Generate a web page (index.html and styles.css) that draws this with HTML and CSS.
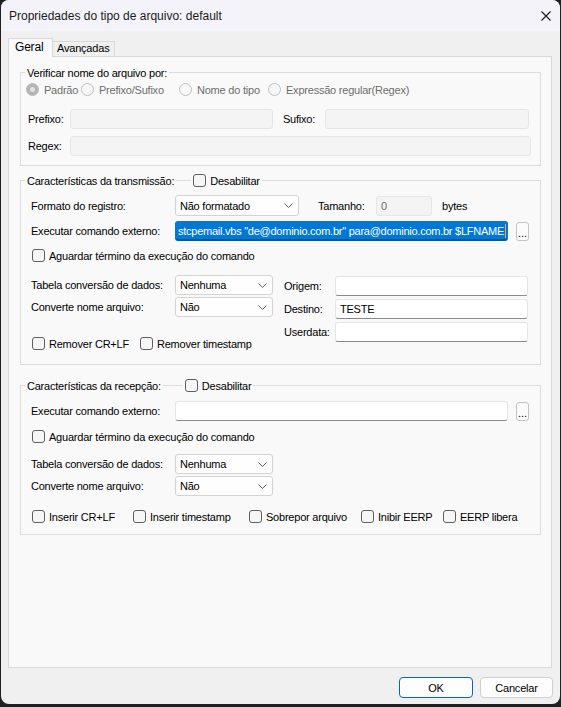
FILE: index.html
```html
<!DOCTYPE html>
<html lang="pt-BR">
<head>
    <meta charset="UTF-8">
    <title>Propriedades do tipo de arquivo: default</title>
    <link rel="stylesheet" href="styles.css">
</head>
<body>
    <div class="window">
        <div class="titlebar">
            <span class="title">Propriedades do tipo de arquivo: default</span>
            <svg class="close" width="10" height="10" viewBox="0 0 10 10">
                <path d="M0.5 0.5 L9.5 9.5 M9.5 0.5 L0.5 9.5" stroke="#1b1b1b" stroke-width="1.1" fill="none"/>
            </svg>
        </div>

        <div class="tabs">
            <div class="tab active">Geral</div>
            <div class="tab">Avançadas</div>
        </div>

        <div class="panel">
            <!-- verificação do nome -->
            <div class="group g-name">
                <div class="group-head">
                    <span class="group-title">Verificar nome do arquivo por:</span>
                </div>
                <div class="radio-row">
                    <label class="radio w-padrao"><span class="dot on"></span>Padrão</label>
                    <label class="radio w-prefixo"><span class="dot"></span>Prefixo/Sufixo</label>
                    <label class="radio w-nome"><span class="dot"></span>Nome do tipo</label>
                    <label class="radio"><span class="dot"></span>Expressão regular(Regex)</label>
                </div>
                <div class="row name-row first">
                    <span class="lbl lbl-short">Prefixo:</span>
                    <div class="field disabled w-prefix"></div>
                    <span class="lbl lbl-short lbl-sufixo">Sufixo:</span>
                    <div class="field disabled w-suffix"></div>
                </div>
                <div class="row name-row second">
                    <span class="lbl lbl-short">Regex:</span>
                    <div class="field disabled w-regex"></div>
                </div>
            </div>

            <!-- transmissão -->
            <div class="group g-tx">
                <div class="group-head">
                    <span class="group-title">Características da transmissão:</span>
                    <label class="check head-check tx-check"><span class="box"></span>Desabilitar</label>
                </div>
                <div class="body">
                    <div class="row r-formato">
                        <span class="lbl lbl-long">Formato do registro:</span>
                        <div class="combo w-formato">Não formatado
                            <svg width="9" height="5" viewBox="0 0 9 5"><path d="M0.5 0.5 L4.5 4.5 L8.5 0.5" stroke="#5d5d5d" fill="none"/></svg>
                        </div>
                        <span class="lbl lbl-tamanho">Tamanho:</span>
                        <div class="field disabled w-tamanho">0</div>
                        <span class="unit">bytes</span>
                    </div>
                    <div class="row r-cmd">
                        <span class="lbl lbl-long">Executar comando externo:</span>
                        <div class="field selected w-cmd">stcpemail.vbs "de@dominio.com.br" para@dominio.com.br $LFNAME<span class="caret"></span></div>
                        <button class="dots">...</button>
                    </div>
                    <div class="row r-wait">
                        <label class="check"><span class="box"></span>Aguardar término da execução do comando</label>
                    </div>
                    <div class="cols">
                        <div class="col-left">
                            <div class="row">
                                <span class="lbl lbl-long">Tabela conversão de dados:</span>
                                <div class="combo w-small">Nenhuma
                                    <svg width="9" height="5" viewBox="0 0 9 5"><path d="M0.5 0.5 L4.5 4.5 L8.5 0.5" stroke="#5d5d5d" fill="none"/></svg>
                                </div>
                            </div>
                            <div class="row r-next">
                                <span class="lbl lbl-long">Converte nome arquivo:</span>
                                <div class="combo w-small">Não
                                    <svg width="9" height="5" viewBox="0 0 9 5"><path d="M0.5 0.5 L4.5 4.5 L8.5 0.5" stroke="#5d5d5d" fill="none"/></svg>
                                </div>
                            </div>
                            <div class="row r-opts">
                                <label class="check w-crlf"><span class="box"></span>Remover CR+LF</label>
                                <label class="check"><span class="box"></span>Remover timestamp</label>
                            </div>
                        </div>
                        <div class="col-right">
                            <div class="row">
                                <span class="lbl lbl-route">Origem:</span>
                                <div class="field w-route"></div>
                            </div>
                            <div class="row">
                                <span class="lbl lbl-route">Destino:</span>
                                <div class="field w-route">TESTE</div>
                            </div>
                            <div class="row">
                                <span class="lbl lbl-route">Userdata:</span>
                                <div class="field w-route"></div>
                            </div>
                        </div>
                    </div>
                </div>
            </div>

            <!-- recepção -->
            <div class="group g-rx">
                <div class="group-head">
                    <span class="group-title">Características da recepção:</span>
                    <label class="check head-check rx-check"><span class="box"></span>Desabilitar</label>
                </div>
                <div class="body">
                    <div class="row r-cmd-rx">
                        <span class="lbl lbl-long">Executar comando externo:</span>
                        <div class="field w-cmd"></div>
                        <button class="dots">...</button>
                    </div>
                    <div class="row r-wait-rx">
                        <label class="check"><span class="box"></span>Aguardar término da execução do comando</label>
                    </div>
                    <div class="row r-table-rx">
                        <span class="lbl lbl-long">Tabela conversão de dados:</span>
                        <div class="combo w-small">Nenhuma
                            <svg width="9" height="5" viewBox="0 0 9 5"><path d="M0.5 0.5 L4.5 4.5 L8.5 0.5" stroke="#5d5d5d" fill="none"/></svg>
                        </div>
                    </div>
                    <div class="row r-next">
                        <span class="lbl lbl-long">Converte nome arquivo:</span>
                        <div class="combo w-small">Não
                            <svg width="9" height="5" viewBox="0 0 9 5"><path d="M0.5 0.5 L4.5 4.5 L8.5 0.5" stroke="#5d5d5d" fill="none"/></svg>
                        </div>
                    </div>
                    <div class="row r-opts-rx">
                        <label class="check w-ins-crlf"><span class="box"></span>Inserir CR+LF</label>
                        <label class="check w-ins-ts"><span class="box"></span>Inserir timestamp</label>
                        <label class="check w-sobrepor"><span class="box"></span>Sobrepor arquivo</label>
                        <label class="check w-inibir"><span class="box"></span>Inibir EERP</label>
                        <label class="check"><span class="box"></span>EERP libera</label>
                    </div>
                </div>
            </div>
        </div>

        <div class="actions">
            <button class="btn default">OK</button>
            <button class="btn">Cancelar</button>
        </div>
    </div>
</body>
</html>
```

FILE: styles.css
```css
/* Base */
* {
    box-sizing: border-box;
}
body {
    margin: 0;
    width: 561px;
    height: 707px;
    overflow: hidden;
    background-color: #202020;
    color: #000;
    font-family: "Liberation Sans", Arial, sans-serif;
    font-size: 11px;
}
.window {
    margin-left: 1px;
    width: 559px;
    height: 704px;
    background: #f0f0f0;
    border-radius: 8px;
    overflow: hidden;
}

/* Title bar */
.titlebar {
    height: 31px;
    display: flex;
    align-items: center;
    padding: 0 9px 0 8px;
    background: #f3f3f9;
}
.title {
    font-size: 12px;
    color: #1a1a1a;
}
.close {
    margin-left: auto;
}

/* Tabs */
.tabs {
    display: flex;
    align-items: flex-end;
    height: 18px;
    margin: 7px 0 0 7px;
}
.tab {
    width: 63px;
    height: 15px;
    margin-left: -1px;
    padding-left: 4px;
    line-height: 13px;
    letter-spacing: -0.2px;
    border: 1px solid #d9d9d9;
    border-bottom: none;
    background: #f0f0f0;
}
.tab.active {
    width: 45px;
    height: 19px;
    margin: 0 0 -1px 0;
    padding-left: 6px;
    font-size: 12px;
    line-height: 17px;
    background: #f9f9f9;
    position: relative;
    z-index: 1;
}
.panel {
    margin-left: 7px;
    width: 544px;
    height: 612px;
    padding-top: 15px;
    border: 1px solid #d9d9d9;
    background: #f9f9f9;
    letter-spacing: -0.22px;
}

/* Group boxes */
.group {
    margin-left: 11px;
    width: 521px;
    border: 1px solid #dcdcdc;
}
.group-head {
    display: flex;
    align-items: center;
    height: 13px;
    margin: -7px 0 0 4px;
}
.group-title,
.head-check {
    padding: 0 2px;
    background: #f9f9f9;
}
.tx-check {
    margin-left: 15px;
}
.rx-check {
    margin-left: 20px;
}
.g-name {
    padding-bottom: 9px;
}
.g-tx {
    margin-top: 14px;
    padding-bottom: 14px;
}
.g-rx {
    margin-top: 20px;
    padding-bottom: 11px;
}
.body {
    padding-left: 10px;
}

.row {
    display: flex;
    align-items: center;
}
.lbl {
    flex-shrink: 0;
}
.lbl-short {
    width: 42px;
}
.lbl-long {
    width: 144px;
}
.lbl-route {
    width: 51px;
}
.lbl-tamanho {
    width: 58px;
    margin-left: 19px;
}
.lbl-sufixo {
    margin-left: 10px;
}
.unit {
    margin-left: 10px;
}

/* Radios */
.radio-row {
    display: flex;
    align-items: center;
    height: 13px;
    margin-top: 4px;
    padding-left: 5px;
}
.radio {
    display: flex;
    align-items: center;
    gap: 5px;
    flex-shrink: 0;
    color: #6e6e6e;
}
.w-padrao { width: 55px; }
.w-prefixo { width: 98px; }
.w-nome { width: 89px; }
.dot {
    width: 13px;
    height: 13px;
    border: 1px solid #c0c0c0;
    border-radius: 50%;
    background: #f7f7f7;
}
.dot.on {
    border-color: #b4b4b4;
    background: #e4e4e4;
    box-shadow: inset 0 0 0 3px #b4b4b4;
}

.name-row {
    padding-left: 7px;
}
.name-row.first {
    margin-top: 13px;
}
.name-row.second {
    margin-top: 7px;
}

/* Text fields */
.field {
    height: 20px;
    display: flex;
    align-items: center;
    padding: 0 4px;
    background: #fff;
    border: 1px solid #e5e5e5;
    border-bottom-color: #8a8a8a;
    border-radius: 3px;
    white-space: nowrap;
    overflow: hidden;
}
.field.disabled {
    background: #f4f4f4;
    border-color: #e6e6e6;
    color: #6d6d6d;
}
.field.selected {
    padding-left: 2px;
    background: #0078d4;
    border-color: #0078d4;
    border-bottom: 2px solid #005a9e;
    color: #fff;
    letter-spacing: -0.25px;
}
.caret {
    width: 1px;
    height: 14px;
    margin-left: 1px;
    flex-shrink: 0;
    background: #f0a050;
}
.w-prefix { width: 203px; }
.w-suffix { width: 204px; }
.w-regex { width: 461px; }
.w-tamanho { width: 56px; }
.w-cmd { width: 333px; }
.w-route { width: 193px; }

/* Combo boxes */
.combo {
    height: 20px;
    display: flex;
    align-items: center;
    justify-content: space-between;
    padding: 0 5px 0 4px;
    background: #fefefe;
    border: 1px solid #d3d3d3;
    border-radius: 3px;
}
.w-formato {
    width: 124px;
    height: 21px;
}
.w-small {
    width: 98px;
}

button {
    font-family: inherit;
    font-size: 11px;
    color: #000;
    cursor: pointer;
}
.dots {
    width: 13px;
    height: 19px;
    margin-left: 8px;
    padding: 0 0 3px;
    display: flex;
    align-items: flex-end;
    justify-content: center;
    line-height: 8px;
    letter-spacing: 0;
    background: #fbfbfb;
    border: 1px solid #c3c3c3;
    border-radius: 3px;
}

/* Checkboxes */
.check {
    display: flex;
    align-items: center;
    gap: 4px;
    height: 13px;
    flex-shrink: 0;
}
.box {
    width: 13px;
    height: 13px;
    border: 1px solid #5f5f5f;
    border-radius: 3px;
    background: #f6f6f6;
}

/* Transmission rows */
.r-formato { margin-top: 8px; }
.r-cmd { margin-top: 5px; }
.r-wait { margin-top: 8px; padding-left: 1px; }
.cols {
    display: flex;
    margin-top: 13px;
}
.col-left {
    width: 253px;
}
.col-right {
    display: flex;
    flex-direction: column;
    gap: 3px;
    margin-top: 1px;
}
.r-next { margin-top: 2px; }
.r-opts { margin-top: 20px; padding-left: 1px; }
.w-crlf { width: 108px; }

/* Reception rows */
.r-cmd-rx { margin-top: 9px; }
.r-wait-rx { margin-top: 9px; padding-left: 1px; }
.r-table-rx { margin-top: 11px; }
.r-opts-rx { margin-top: 14px; padding-left: 1px; }
.w-ins-crlf { width: 101px; }
.w-ins-ts { width: 116px; }
.w-sobrepor { width: 112px; }
.w-inibir { width: 82px; }

/* Dialog buttons */
.actions {
    display: flex;
    justify-content: flex-end;
    gap: 7px;
    margin-top: 9px;
    padding-right: 7px;
}
.btn {
    width: 73px;
    height: 21px;
    padding: 0;
    letter-spacing: -0.2px;
    background: #fdfdfd;
    border: 1px solid #d0d0d0;
    border-radius: 4px;
}
.btn.default {
    width: 74px;
    border-color: #0067c0;
}
```
